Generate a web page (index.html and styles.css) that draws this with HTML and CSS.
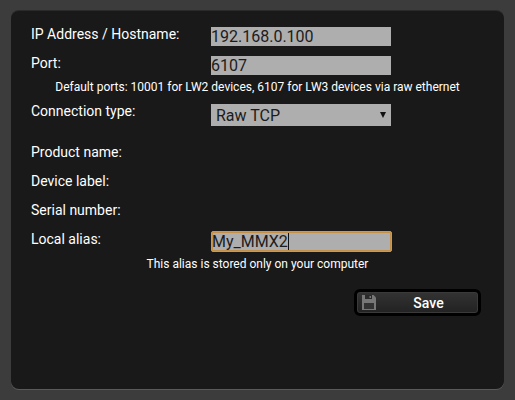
FILE: index.html
```html
<!DOCTYPE html>
<html lang="en">
<head>
  <meta charset="UTF-8" />
  <meta name="viewport" content="width=device-width, initial-scale=1.0"/>
  <title>Device Properties</title>
  <link rel="stylesheet" href="styles.css">
</head>
<body>

  <div class="panel">
    <div class="row row-ip">
      <label>IP Address / Hostname:</label>
      <input class="field" type="text" value="192.168.0.100" />
    </div>
    <div class="row row-port">
      <label>Port:</label>
      <input class="field" type="text" value="6107" />
    </div>
    <p class="hint hint-port">Default ports: 10001 for LW2 devices, 6107 for LW3 devices via raw ethernet</p>
    <div class="row row-type">
      <label>Connection type:</label>
      <div class="select">
        <span>Raw TCP</span>
        <span class="arrow"></span>
      </div>
    </div>
    <div class="row row-info"><label>Product name:</label></div>
    <div class="row row-info"><label>Device label:</label></div>
    <div class="row row-info"><label>Serial number:</label></div>
    <div class="row row-alias">
      <label>Local alias:</label>
      <div class="field field-alias">My_MMX2<span class="caret"></span></div>
    </div>
    <p class="hint hint-alias">This alias is stored only on your computer</p>
    <div class="actions">
      <a class="btn">
        <svg class="btn-icon" width="14" height="15" viewBox="0 0 14 15">
          <path fill="#777" d="M0 0h11.5L14 2.5V15H0z"/>
          <rect fill="#2a2a2a" x="3" y="0" width="7" height="4"/>
          <rect fill="#777" x="7.5" y="1" width="1.5" height="2"/>
          <rect fill="#333" x="2" y="8" width="10" height="6"/>
        </svg>
        <span class="btn-text">Save</span>
      </a>
    </div>
  </div>

</body>
</html>
```

FILE: styles.css
```css
* {
  box-sizing: border-box;
}

html, body {
  height: 100%;
}

body {
  margin: 0;
  padding: 11px;
  background-color: #3c3c3c;
  font-family: Roboto, sans-serif;
  font-size: 14px;
  color: #fff;
  overflow: hidden;
}

.panel {
  height: 378px;
  padding: 16px 20px 0;
  background-color: #191919;
  border-radius: 8px;
  box-shadow: 0 -1px 0 #2a2a2a, 0 1px 0 #5a5a5a;
}

.row {
  display: flex;
  align-items: flex-start;
}

.row label {
  width: 180px;
  line-height: 16px;
  flex-shrink: 0;
}

.row-ip label,
.row-port label,
.row-type label {
  margin-top: -1px;
}

.row-port,
.row-type {
  margin-top: 10px;
}

.row-info {
  height: 29px;
  align-items: center;
}

.row-type + .row-info {
  margin-top: 11px;
}

.field {
  width: 180px;
  height: 19px;
  padding: 0;
  border: none;
  outline: none;
  background-color: #aeaeae;
  color: #1c1c1c;
  font-family: Roboto, sans-serif;
  font-size: 16px;
  line-height: 19px;
}

.field-alias {
  display: flex;
  align-items: center;
  height: 21px;
  width: 181px;
  border: 1px solid #e8951a;
  border-radius: 2px;
  box-shadow: inset 0 0 0 1px rgba(205, 130, 25, 0.7);
}

.caret {
  width: 1px;
  height: 17px;
  background-color: #111;
}

.select {
  display: flex;
  align-items: center;
  justify-content: space-between;
  width: 180px;
  height: 22px;
  padding: 0 5px 0 5px;
  background-color: #aeaeae;
  color: #1c1c1c;
  font-size: 16px;
}

.arrow {
  width: 0;
  height: 0;
  border-left: 3px solid transparent;
  border-right: 3px solid transparent;
  border-top: 6px solid #111;
}

.hint {
  margin: 5px 0 0;
  font-size: 12px;
  line-height: 14px;
  text-align: center;
}

.row-alias {
  margin-top: 7px;
}

.actions {
  display: flex;
  justify-content: flex-end;
  margin-top: 18px;
  padding-right: 3px;
}

.btn {
  display: flex;
  align-items: center;
  width: 127px;
  height: 27px;
  padding-left: 5px;
  background: linear-gradient(#333, #222);
  border: 3px solid #000;
  border-radius: 6px;
  box-shadow: inset 0 0 0 1px #3a3a3a;
  font-weight: 500;
  cursor: pointer;
}

.btn-text {
  flex: 1;
  padding-left: 3px;
  text-align: center;
}
```
